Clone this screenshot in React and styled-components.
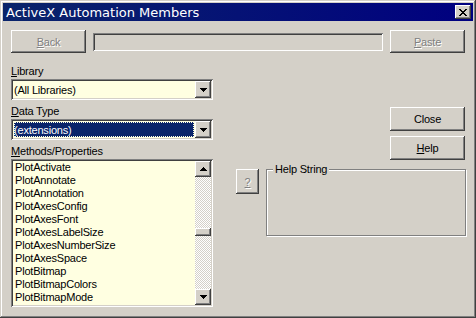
import React from "react";
import styled, { createGlobalStyle } from "styled-components";

const GlobalStyle = createGlobalStyle`
  html, body { margin: 0; padding: 0; background: #d4d0c8; }
  body {
    font-family: "Liberation Sans", Arial, sans-serif;
    font-size: 11px;
    letter-spacing: -0.2px;
    color: #000;
  }
  * { box-sizing: border-box; }
`;

const raised = `
  background: #d4d0c8;
  box-shadow: inset -1px -1px 0 #404040, inset 1px 1px 0 #ffffff,
    inset -2px -2px 0 #808080, inset 2px 2px 0 #d4d0c8;
`;

const sunken = `
  box-shadow: inset 1px 1px 0 #808080, inset -1px -1px 0 #ffffff,
    inset 2px 2px 0 #404040, inset -2px -2px 0 #d4d0c8;
`;

const Window = styled.div`
  width: 476px;
  height: 318px;
  padding: 3px;
  background: #d4d0c8;
  box-shadow: inset -1px -1px 0 #404040, inset 1px 1px 0 #d4d0c8,
    inset -2px -2px 0 #808080, inset 2px 2px 0 #ffffff;
  display: flex;
  flex-direction: column;
`;

const TitleBar = styled.div`
  height: 18px;
  flex: none;
  display: flex;
  align-items: center;
  padding: 0 2px 0 3px;
  background: linear-gradient(to right, #0a246a, #000080);
  color: #fff;
  font-family: "DejaVu Sans", Verdana, sans-serif;
  font-size: 13px;
  letter-spacing: 0;
`;

const TitleText = styled.span`
  flex: 1;
  white-space: nowrap;
`;

const CloseBox = styled.div`
  ${raised}
  width: 16px;
  height: 14px;
  display: flex;
  align-items: center;
  justify-content: center;
`;

const Body = styled.div`
  flex: 1;
  display: flex;
  flex-direction: column;
  padding: 9px 8px 0 8px;
`;

const TopRow = styled.div`
  display: flex;
  align-items: center;
  gap: 7px;
  height: 23px;
`;

const Button = styled.button`
  ${raised}
  width: 75px;
  height: ${(p) => p.$h || 23}px;
  border: 0;
  padding: 0;
  margin: 0;
  font-family: "Liberation Sans", Arial, sans-serif;
  font-size: 11px;
  letter-spacing: -0.2px;
  color: ${(p) => (p.disabled ? "#808080" : "#000")};
  text-shadow: ${(p) => (p.disabled ? "1px 1px 0 #ffffff" : "none")};
  flex: none;
  u { text-decoration: underline; }
`;

const EditField = styled.div`
  ${sunken}
  flex: 1;
  height: 18px;
  background: #d4d0c8;
`;

const Main = styled.div`
  display: flex;
  margin-top: 11px;
`;

const LeftCol = styled.div`
  width: 202px;
  flex: none;
  display: flex;
  flex-direction: column;
`;

const Label = styled.div`
  line-height: 14px;
  height: 14px;
  margin-bottom: 1px;
  white-space: nowrap;
`;

const Combo = styled.div`
  ${sunken}
  height: 21px;
  padding: 2px;
  margin-bottom: 4px;
  background: #ffffe1;
  display: flex;
`;

const ComboValue = styled.div`
  flex: 1;
  display: flex;
  align-items: center;
  padding-left: ${(p) => (p.$selected ? "0" : "1px")};
  white-space: nowrap;
`;

const Highlight = styled.div`
  flex: 1;
  align-self: stretch;
  margin: 1px 1px 1px 1px;
  background: #0a246a;
  color: #fff;
  outline: 1px dotted #ffffe1;
  outline-offset: -1px;
  display: flex;
  align-items: center;
  padding-left: 0;
`;

const DropButton = styled.div`
  ${raised}
  width: 16px;
  flex: none;
  display: flex;
  align-items: center;
  justify-content: center;
`;

const List = styled.div`
  ${sunken}
  height: 148px;
  padding: 2px;
  background: #ffffe1;
  display: flex;
`;

const Items = styled.div`
  flex: 1;
  overflow: hidden;
  padding-left: 2px;
`;

const Item = styled.div`
  height: 13px;
  line-height: 13px;
  white-space: nowrap;
`;

const ScrollBar = styled.div`
  width: 16px;
  flex: none;
  display: flex;
  flex-direction: column;
  background: repeating-conic-gradient(#ffffff 0% 25%, #d4d0c8 0% 50%) 0 0 / 2px 2px;
`;

const ScrollButton = styled.div`
  ${raised}
  height: 16px;
  flex: none;
  display: flex;
  align-items: center;
  justify-content: center;
`;

const Thumb = styled.div`
  ${raised}
  height: 8px;
  flex: none;
  margin-top: 51px;
`;

const Spacer = styled.div`
  flex: 1;
`;

const RightCol = styled.div`
  flex: 1;
  display: flex;
  flex-direction: column;
`;

const ButtonStack = styled.div`
  align-self: flex-end;
  display: flex;
  flex-direction: column;
  gap: 5px;
  margin-top: 43px;
`;

const HelpRow = styled.div`
  display: flex;
  align-items: flex-start;
  margin-top: 3px;
`;

const QButton = styled(Button)`
  width: 23px;
  margin: 6px 0 0 23px;
`;

const Group = styled.fieldset`
  flex: 1;
  min-width: 0;
  margin: 0 -1px 0 7px;
  padding: 0;
  border: 1px solid #808080;
  box-shadow: inset 1px 1px 0 #ffffff, 1px 1px 0 #ffffff;
`;

const Legend = styled.legend`
  margin-left: 6px;
  padding: 0 2px;
  line-height: 13px;
  background: #d4d0c8;
`;

const GroupBody = styled.div`
  height: 59px;
`;

const ArrowDown = () => (
  <svg width="7" height="4" viewBox="0 0 7 4" shapeRendering="crispEdges">
    <rect x="0" y="0" width="7" height="1" fill="#000" />
    <rect x="1" y="1" width="5" height="1" fill="#000" />
    <rect x="2" y="2" width="3" height="1" fill="#000" />
    <rect x="3" y="3" width="1" height="1" fill="#000" />
  </svg>
);

const ArrowUp = () => (
  <svg width="7" height="4" viewBox="0 0 7 4" shapeRendering="crispEdges">
    <rect x="3" y="0" width="1" height="1" fill="#000" />
    <rect x="2" y="1" width="3" height="1" fill="#000" />
    <rect x="1" y="2" width="5" height="1" fill="#000" />
    <rect x="0" y="3" width="7" height="1" fill="#000" />
  </svg>
);

const CloseGlyph = () => {
  const rows = [
    [0, 6],
    [1, 5],
    [2, 4],
    [3, 3],
    [2, 4],
    [1, 5],
    [0, 6],
  ];
  return (
    <svg width="8" height="7" viewBox="0 0 8 7" shapeRendering="crispEdges">
      {rows.map(([a, b], i) =>
        a === b ? (
          <rect key={i} x={a} y={i} width="2" height="1" fill="#000" />
        ) : (
          <g key={i}>
            <rect x={a} y={i} width="2" height="1" fill="#000" />
            <rect x={b} y={i} width="2" height="1" fill="#000" />
          </g>
        )
      )}
    </svg>
  );
};

const members = [
  "PlotActivate",
  "PlotAnnotate",
  "PlotAnnotation",
  "PlotAxesConfig",
  "PlotAxesFont",
  "PlotAxesLabelSize",
  "PlotAxesNumberSize",
  "PlotAxesSpace",
  "PlotBitmap",
  "PlotBitmapColors",
  "PlotBitmapMode",
];

export default function App() {
  return (
    <>
      <GlobalStyle />
      <Window>
        <TitleBar>
          <TitleText>ActiveX Automation Members</TitleText>
          <CloseBox>
            <CloseGlyph />
          </CloseBox>
        </TitleBar>
        <Body>
          <TopRow>
            <Button disabled>
              <u>B</u>ack
            </Button>
            <EditField />
            <Button disabled>
              <u>P</u>aste
            </Button>
          </TopRow>
          <Main>
            <LeftCol>
              <Label>
                <u>L</u>ibrary
              </Label>
              <Combo>
                <ComboValue>(All Libraries)</ComboValue>
                <DropButton>
                  <ArrowDown />
                </DropButton>
              </Combo>
              <Label>
                <u>D</u>ata Type
              </Label>
              <Combo>
                <Highlight>(extensions)</Highlight>
                <DropButton>
                  <ArrowDown />
                </DropButton>
              </Combo>
              <Label>
                <u>M</u>ethods/Properties
              </Label>
              <List>
                <Items>
                  {members.map((m) => (
                    <Item key={m}>{m}</Item>
                  ))}
                </Items>
                <ScrollBar>
                  <ScrollButton>
                    <ArrowUp />
                  </ScrollButton>
                  <Thumb />
                  <Spacer />
                  <ScrollButton>
                    <ArrowDown />
                  </ScrollButton>
                </ScrollBar>
              </List>
            </LeftCol>
            <RightCol>
              <ButtonStack>
                <Button $h={24}>Close</Button>
                <Button $h={24}>
                  <u>H</u>elp
                </Button>
              </ButtonStack>
              <HelpRow>
                <QButton $h={25} disabled>
                  <u>?</u>
                </QButton>
                <Group>
                  <Legend>Help String</Legend>
                  <GroupBody />
                </Group>
              </HelpRow>
            </RightCol>
          </Main>
        </Body>
      </Window>
    </>
  );
}
